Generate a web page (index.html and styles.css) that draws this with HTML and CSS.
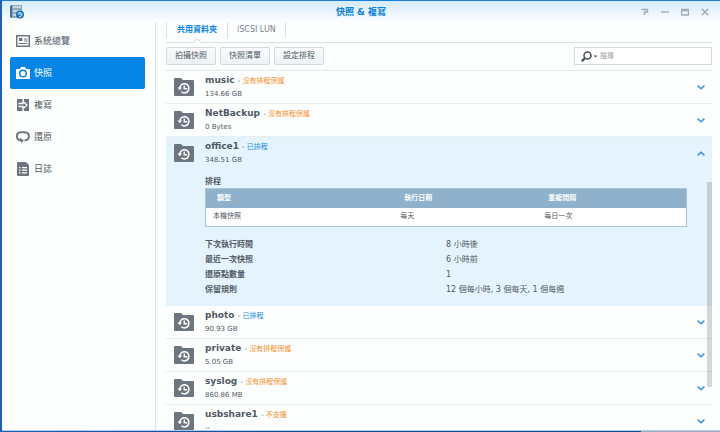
FILE: index.html
```html
<!DOCTYPE html>
<html lang="zh-Hant">
<head>
<meta charset="utf-8">
<meta name="viewport" content="width=device-width, initial-scale=1">
<title>快照 &amp; 複寫</title>
<link rel="stylesheet" href="styles.css">
</head>
<body>
<svg class="sprite" aria-hidden="true">
  <symbol id="folder" viewBox="0 0 20 18">
    <path fill="#6c7680" d="M0 1q0-1 1-1h6l2 2h10q1 0 1 1v14q0 1-1 1H1q-1 0-1-1z"/>
    <path fill="none" stroke="#fff" stroke-width="1.5" d="M5.800 10.500a4.600 4.600 0 1 1 1.600 3.300M10.300 7.500v3.200h3"/>
    <path fill="#fff" d="M3.500 9.500h4.600l-2.300 2.800z"/>
  </symbol>
  <symbol id="down" viewBox="0 0 8 5"><path fill="none" stroke="#3a94dc" stroke-width="1.500" d="M.6.600 4 3.800 7.400.6"/></symbol>
  <symbol id="up" viewBox="0 0 8 5"><path fill="none" stroke="#3a94dc" stroke-width="1.500" d="M.6 4.400 4 1.200l3.400 3.200"/></symbol>
</svg>
<div class="window">
  <header class="titlebar">
    <svg class="app-icon" viewBox="0 0 14 14" aria-hidden="true">
      <path fill="#8fa9bd" d="M0 1 2 0h10v13H2l-2-1z"/>
      <path fill="#4d6f8c" d="M0 1l2-1v13l-2-1z"/>
      <path fill="#c5d6e2" d="M3 1h8v2H3zM3 5h8v2H3zM3 9h8v2H3z"/>
      <circle cx="10" cy="9.500" r="4" fill="#1d6fb2"/>
      <path fill="none" stroke="#d5efff" d="M8 9.500a2 2 0 1 1 1 1.800M10 8.300v1.400h1"/>
    </svg>
    <h1 class="title">快照 &amp; 複寫</h1>
    <div class="controls">
      <button aria-label="說明"><svg viewBox="0 0 8 8"><path d="M.5 1.500h6v2.500H3.500v3"/></svg></button>
      <button aria-label="最小化"><svg viewBox="0 0 8 8"><path d="M0 4h8"/></svg></button>
      <button aria-label="最大化"><svg viewBox="0 0 8 8"><path d="M.5 1.500h7v5.500h-7zM.5 2.500h7"/></svg></button>
      <button aria-label="關閉"><svg viewBox="0 0 8 8"><path d="m.8.8 6.400 6.400M7.200.8.8 7.200"/></svg></button>
    </div>
  </header>
  <div class="body">
    <nav class="sidebar">
      <a href="#overview"><svg viewBox="0 0 14 12"><path fill="none" stroke="#6c7680" stroke-width="1.500" d="M.75.750h12.500v10.500H.75z"/><path fill="#6c7680" d="M3 3h3.500v3H3zM8 3.500h3.500v1H8zM8 5.500h3.500v1H8zM2.500 8h9v1h-9z"/></svg>系統總覽</a>
      <a href="#snapshot" class="active" aria-current="page"><svg viewBox="0 0 14 12"><path fill="#fff" d="M1 2h2.800L5 0h4l1.200 2H13q1 0 1 1v8q0 1-1 1H1q-1 0-1-1V3q0-1 1-1z"/><circle cx="7" cy="6.500" r="3.300" fill="none" stroke="#0685e6" stroke-width="1.500"/></svg>快照</a>
      <a href="#replication"><svg viewBox="0 0 14 12"><path fill="#6c7680" d="M1 0h5l2 2V0h5v12H8v-2l-2 2H1z"/><path fill="none" stroke="#fff" stroke-width="1.300" d="M2.500 4.500H7V2.300L11 6 7 9.700V7.500H2.500"/></svg>複寫</a>
      <a href="#recovery"><svg viewBox="0 0 14 12"><path fill="none" stroke="#6c7680" stroke-width="2" d="M5 9.500C-.5 9-.5 1.300 5 1.300h4c5.300 0 5.300 7.700-.5 8.200"/><path fill="#6c7680" d="M3.500 6.500 8 9.300 5.500 12z"/></svg>還原</a>
      <a href="#log"><svg viewBox="0 0 14 14"><path fill="#6c7680" d="M1 1q0-1 1-1h8l3 3v10q0 1-1 1H2q-1 0-1-1z"/><path fill="#fff" d="M3 5h1.500v1.200H3zM6 5h5v1.200H6zM3 7.600h1.500v1.200H3zM6 7.600h5v1.200H6zM3 10.200h1.500v1.200H3zM6 10.200h5v1.200H6z"/></svg>日誌</a>
    </nav>
    <main class="content">
      <div class="tabs" role="tablist">
        <button role="tab" class="tab selected" aria-selected="true">共用資料夾</button>
        <button role="tab" class="tab" aria-selected="false">iSCSI LUN</button>
      </div>
      <div class="toolbar">
        <button class="action">拍攝快照</button>
        <button class="action">快照清單</button>
        <button class="action">設定排程</button>
        <label class="search">
          <svg viewBox="0 0 17 11" aria-hidden="true"><circle cx="6.500" cy="4.500" r="3.500" fill="none" stroke="#4b5661" stroke-width="1.600"/><path stroke="#4b5661" stroke-width="2.400" d="M4 7 .8 10.200"/><path fill="#4b5661" d="M12.500 4.500h4l-2 2z"/></svg>
          <input type="text" placeholder="搜尋" aria-label="搜尋">
        </label>
      </div>
      <div class="list">
        <section class="row">
          <svg class="folder"><use href="#folder"/></svg>
          <div class="info"><h2>music <span>- <em>沒有排程保護</em></span></h2><p>134.66 GB</p></div>
          <button class="toggle" aria-label="展開 music"><svg><use href="#down"/></svg></button>
        </section>
        <section class="row">
          <svg class="folder"><use href="#folder"/></svg>
          <div class="info"><h2>NetBackup <span>- <em>沒有排程保護</em></span></h2><p>0 Bytes</p></div>
          <button class="toggle" aria-label="展開 NetBackup"><svg><use href="#down"/></svg></button>
        </section>
        <section class="row open">
          <svg class="folder"><use href="#folder"/></svg>
          <div class="info"><h2>office1 <span>- <em class="ok">已排程</em></span></h2><p>348.51 GB</p></div>
          <button class="toggle" aria-label="收合 office1"><svg><use href="#up"/></svg></button>
          <div class="details">
            <h3>排程</h3>
            <table>
              <thead><tr><th class="kind">類型</th><th class="date">執行日期</th><th>重複間隔</th></tr></thead>
              <tbody><tr><td>本機快照</td><td>每天</td><td>每日一次</td></tr></tbody>
            </table>
            <dl>
              <dt>下次執行時間</dt><dd>8 小時後</dd>
              <dt>最近一次快照</dt><dd>6 小時前</dd>
              <dt>還原點數量</dt><dd>1</dd>
              <dt>保留規則</dt><dd>12 個每小時, 3 個每天, 1 個每週</dd>
            </dl>
          </div>
        </section>
        <section class="row">
          <svg class="folder"><use href="#folder"/></svg>
          <div class="info"><h2>photo <span>- <em class="ok">已排程</em></span></h2><p>90.93 GB</p></div>
          <button class="toggle" aria-label="展開 photo"><svg><use href="#down"/></svg></button>
        </section>
        <section class="row">
          <svg class="folder"><use href="#folder"/></svg>
          <div class="info"><h2>private <span>- <em>沒有排程保護</em></span></h2><p>5.05 GB</p></div>
          <button class="toggle" aria-label="展開 private"><svg><use href="#down"/></svg></button>
        </section>
        <section class="row">
          <svg class="folder"><use href="#folder"/></svg>
          <div class="info"><h2>syslog <span>- <em>沒有排程保護</em></span></h2><p>860.86 MB</p></div>
          <button class="toggle" aria-label="展開 syslog"><svg><use href="#down"/></svg></button>
        </section>
        <section class="row">
          <svg class="folder"><use href="#folder"/></svg>
          <div class="info"><h2>usbshare1 <span>- <em>不支援</em></span></h2><p>--</p></div>
          <button class="toggle" aria-label="展開 usbshare1"><svg><use href="#down"/></svg></button>
        </section>
        <div class="scrollbar"></div>
      </div>
    </main>
  </div>
</div>
</body>
</html>
```
FILE: styles.css
```css
* {
  box-sizing: border-box;
}

body {
  margin: 0;
  height: 100vh;
  padding: 0 0 1px 2px;
  background: linear-gradient(90deg, #1f5fb8 0, #1c4a93 40%, #1c4a93 89%, #a9abb0 89%);
  color: #505a64;
  font: 8px/12px "DejaVu Sans", "Noto Sans CJK TC", sans-serif;
  overflow: hidden;
}

h1, h2, h3, p, dl, dd {
  margin: 0;
}

button, input {
  font: inherit;
  color: inherit;
  padding: 0;
  margin: 0;
  border: 0;
  background: none;
}

svg {
  display: block;
  flex: none;
}

.sprite {
  position: absolute;
  width: 0;
  height: 0;
}

.window {
  display: flex;
  flex-direction: column;
  height: 100%;
  background: #fdfefe;
  border-top: 1px solid #1b7fd6;
  border-bottom: 1px solid #a9d0f3;
}

.titlebar {
  display: grid;
  grid-template-columns: 1fr auto 1fr;
  align-items: center;
  height: 21px;
  padding: 0 8px;
  background: linear-gradient(#d3eafb, #fdfefe);
}

.app-icon {
  width: 14px;
  height: 14px;
}

.title {
  color: #0b7fd9;
  font-size: 9px;
  line-height: 12px;
}

.controls {
  display: flex;
  justify-content: flex-end;
  gap: 12px;
  padding-right: 3px;
}

.controls svg {
  width: 8px;
  height: 8px;
  fill: none;
  stroke: #a0abb5;
  stroke-width: 1.4;
}

.body {
  display: flex;
  flex: 1;
  min-height: 0;
}

.sidebar {
  width: 154px;
  padding: 3px 10px 0 8px;
  border-right: 1px solid #dfe3e6;
}

.sidebar a {
  display: flex;
  align-items: center;
  gap: 4px;
  height: 32px;
  padding-left: 6px;
  border-radius: 2px;
  color: #505a64;
  font-size: 9px;
  text-decoration: none;
}

.sidebar svg {
  width: 14px;
  height: 14px;
}

.sidebar .active {
  background: #0685e6;
  color: #fff;
}

.content {
  display: flex;
  flex: 1;
  flex-direction: column;
  min-width: 0;
  padding: 0 8px 0 10px;
}

.tabs {
  display: flex;
  height: 21px;
  padding-bottom: 4px;
  border-bottom: 1px solid #dcdfe2;
}

.tab {
  position: relative;
  padding: 0 9px;
  border-right: 1px solid #d9e0e5;
  color: #76808a;
}

.tab:first-child {
  padding: 0 10px;
  border-left: 1px solid #d9e0e5;
}

.tab.selected {
  color: #0b85e4;
  font-weight: bold;
}

.tab.selected::after {
  content: "";
  position: absolute;
  bottom: -7px;
  left: 50%;
  width: 5px;
  height: 5px;
  margin-left: -3px;
  border: solid #dcdfe2;
  border-width: 1px 0 0 1px;
  background: #fdfefe;
  transform: rotate(45deg);
}

.toolbar {
  display: flex;
  gap: 4px;
  padding: 4px 0 5px;
}

.action {
  width: 50px;
  height: 18px;
  border: 1px solid #cfdae3;
  border-radius: 2px;
  background: linear-gradient(#f9fbfd, #edf3f9);
}

.search {
  display: flex;
  align-items: center;
  gap: 2px;
  width: 138px;
  height: 18px;
  margin-left: auto;
  padding-left: 6px;
  border: 1px solid #d3dbe2;
  background: #fff;
}

.search svg {
  width: 17px;
  height: 11px;
}

.search input {
  flex: 1;
  min-width: 0;
  font-size: 7px;
}

.search input::placeholder {
  color: #98a1a9;
}

.list {
  position: relative;
  flex: 1;
  min-height: 0;
  border-top: 1px solid #e4e8eb;
  overflow: hidden;
}

.row {
  display: grid;
  grid-template-columns: 20px 1fr 8px;
  column-gap: 11px;
  padding: 3px 7px 2px 8px;
  border-bottom: 1px solid #e8edf0;
}

.folder {
  width: 20px;
  height: 18px;
  margin-top: 4px;
}

.info {
  font-size: 7px;
}

.info h2 {
  font-size: 9px;
  line-height: 13px;
}

.info h2 span {
  font-size: 7px;
  font-weight: normal;
  line-height: 1px;
}

.info em {
  color: #f78d1e;
  font-style: normal;
}

.info .ok {
  color: #1b8ee6;
}

.info p {
  line-height: 14px;
}

.toggle {
  align-self: center;
}

.toggle svg {
  width: 8px;
  height: 5px;
}

.open {
  border-bottom: 0;
  background: #e5f3fd;
}

.details {
  grid-column: 2 / 4;
  padding: 9px 18px 7px 0;
}

.details h3 {
  font-size: 8px;
  line-height: 12px;
}

table {
  width: 100%;
  border: 1px solid #a9c6d9;
  border-spacing: 0;
  background: #fff;
  font-size: 7px;
  line-height: 11px;
  text-align: left;
}

th {
  padding: 4px 11px;
  background: #8fb1cc;
  color: #fff;
}

td {
  padding: 3px 7px 4px;
}

.kind {
  width: 39%;
}

.date {
  width: 30%;
}

dl {
  display: grid;
  grid-template-columns: 1fr 1fr;
  padding-top: 10px;
  line-height: 15px;
}

dt {
  font-weight: bold;
}

.scrollbar {
  position: absolute;
  top: 31%;
  right: 0;
  width: 5px;
  height: 57%;
  background: rgba(80, 90, 100, 0.24);
}
```
